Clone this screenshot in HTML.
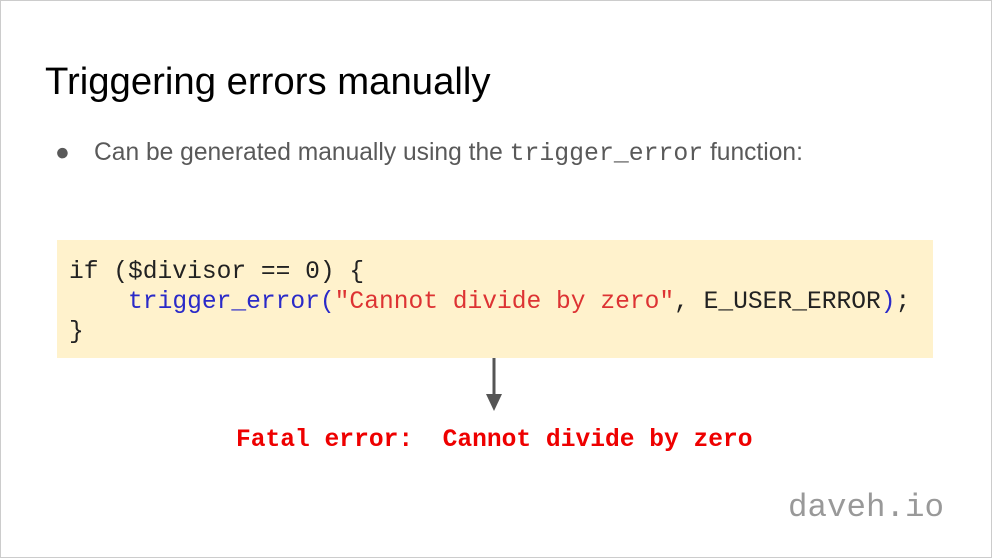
<!DOCTYPE html>
<html><head><style>
body{margin:0;width:992px;height:558px;overflow:hidden;background:#fff;position:relative;font-family:"Liberation Sans",sans-serif}
.b{position:absolute;left:0;top:0;width:990px;height:556px;border:1px solid #ccc}
.t{position:absolute;left:45px;top:59px;font-size:38.3px;color:#000;line-height:46px;white-space:nowrap}
.bl{position:absolute;left:55px;top:138px;font-size:24.6px;color:#595959;line-height:30px;white-space:nowrap}
.m{font-family:"Liberation Mono",monospace;font-size:24.8px}
.code{position:absolute;left:57px;top:240px;width:876px;height:118px;background:#fff2cc}
pre{margin:0;position:absolute;left:12px;top:18px;font-family:"Liberation Mono",monospace;font-size:24.6px;line-height:30px;color:#222}
.f{position:absolute;left:236px;top:426px;font-family:"Liberation Mono",monospace;font-weight:bold;font-size:24.6px;color:#e00;white-space:pre;line-height:30px}
.d{position:absolute;left:788px;top:489px;font-family:"Liberation Mono",monospace;font-size:32.5px;color:#999;line-height:38px}
</style></head><body>
<div class="b"></div>
<div class="t">Triggering errors manually</div>
<div class="bl"><span style="display:inline-block;width:39px">●</span>Can be generated manually using the <span class="m">trigger_error</span> function:</div>
<div class="code"><pre>if ($divisor == 0) {
    <span style="color:#2a2ac8">trigger_error(</span><span style="color:#d33">"Cannot divide by zero"</span>, E_USER_ERROR<span style="color:#2a2ac8">)</span>;
}</pre></div>
<svg style="position:absolute;left:484px;top:356px" width="20" height="56"><line x1="10" y1="2" x2="10" y2="40" stroke="#555" stroke-width="3"/><polygon points="2,38 18,38 10,55" fill="#555"/></svg>
<div class="f">Fatal error:  Cannot divide by zero</div>
<div class="d">daveh.io</div>
</body></html>
